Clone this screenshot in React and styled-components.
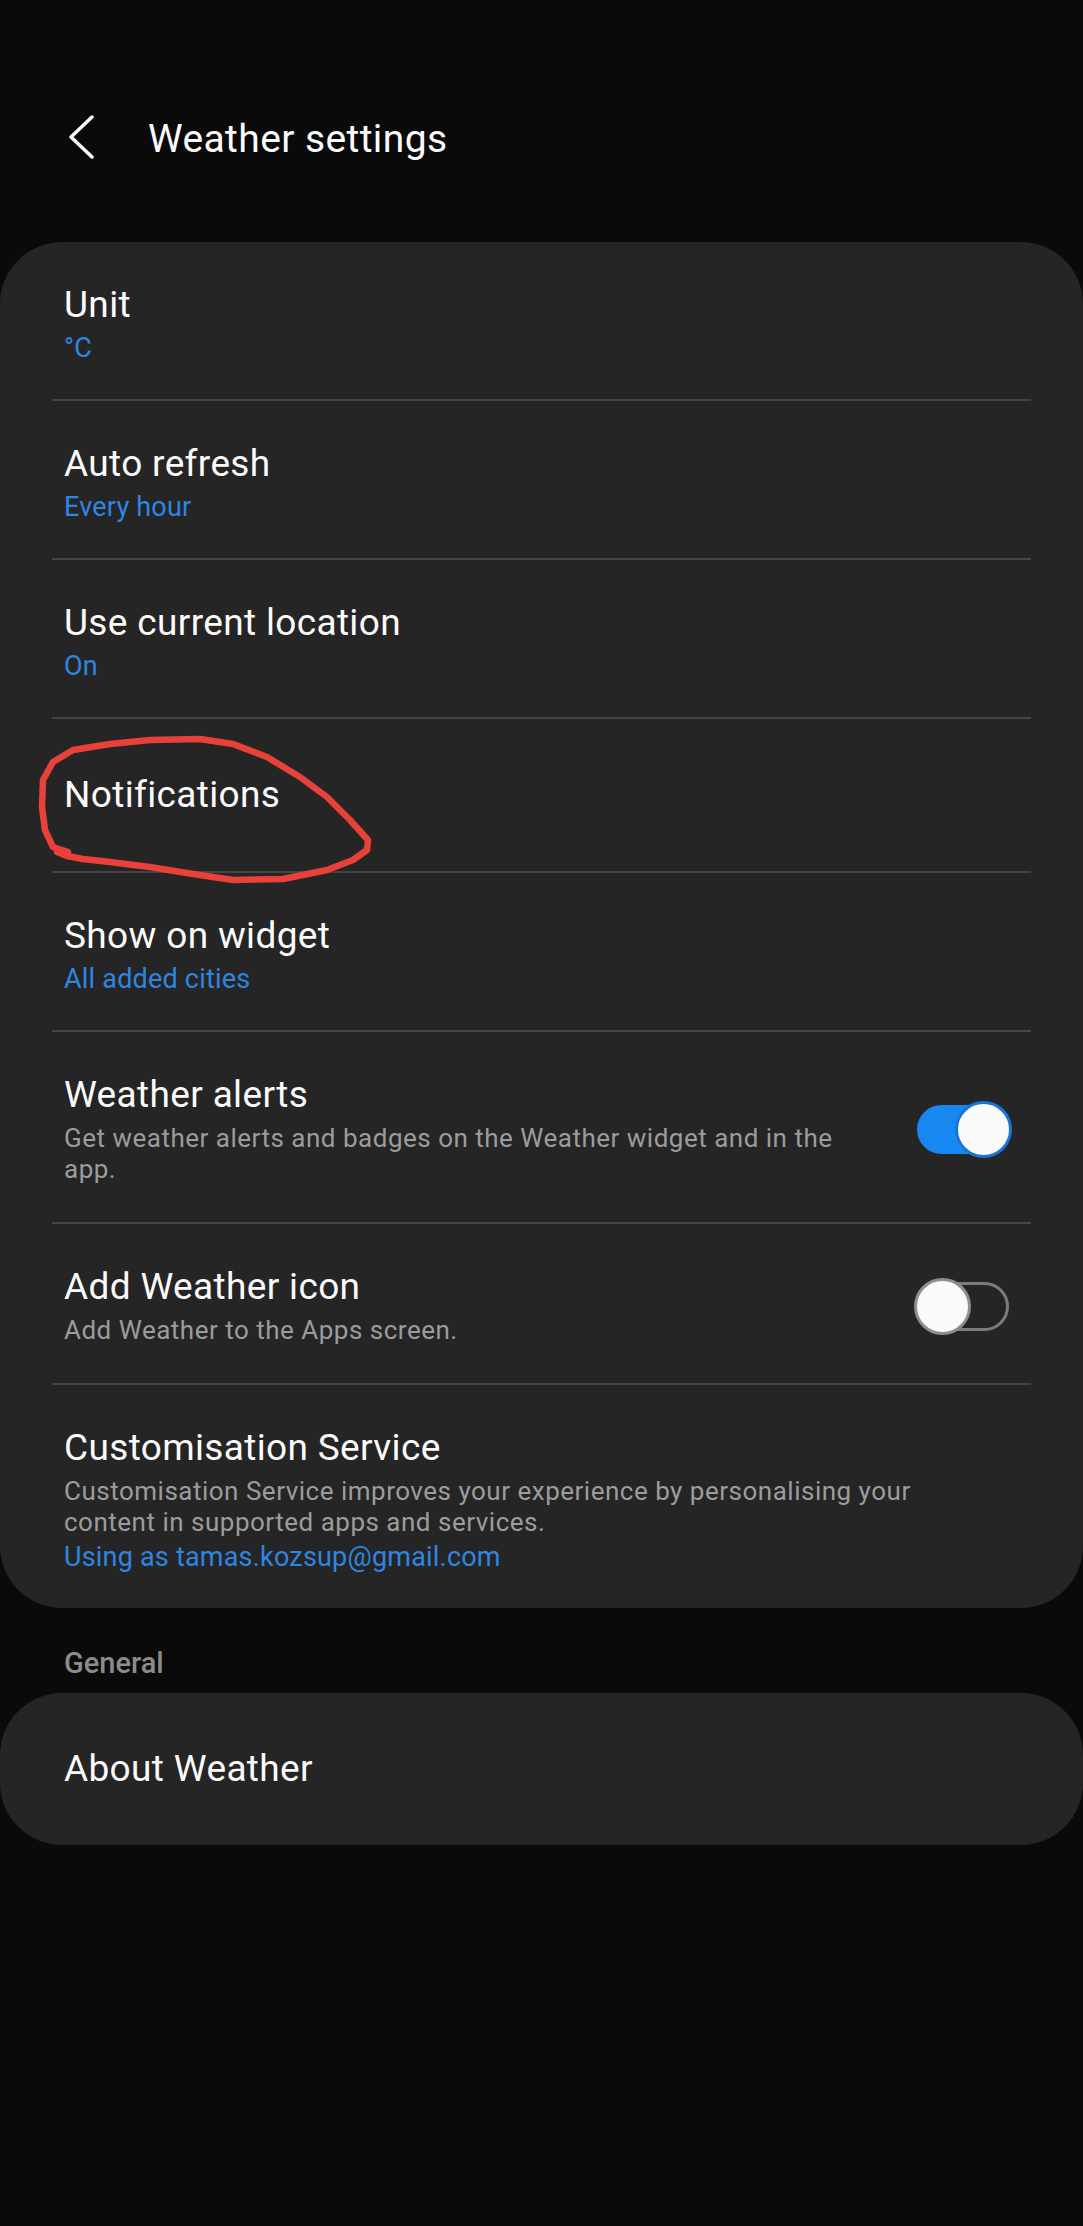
import styled, { createGlobalStyle } from "styled-components";

const GlobalStyle = createGlobalStyle`
    body {
        margin: 0;
        background: #0a0a0a;
        font-family: Roboto, "Noto Sans", "Liberation Sans", sans-serif;
        -webkit-font-smoothing: antialiased;
    }
`;

const Page = styled.div`
    min-height: 2226px;
    background: #0a0a0a;
`;

const Header = styled.header`
    display: flex;
    align-items: center;
    height: 56px;
    padding: 111px 0 0 68px;
`;

const BackButton = styled.button`
    display: flex;
    padding: 0;
    margin: -4px 54px 0 0;
    border: none;
    background: none;
    cursor: pointer;
`;

const HeaderTitle = styled.h1`
    margin: 0;
    font-size: 39px;
    font-weight: 400;
    line-height: 48px;
    letter-spacing: 0.4px;
    color: #fafafa;
`;

const Card = styled.section`
    margin-top: ${(p) => p.$top}px;
    padding: 0 52px;
    background: #252525;
    border-radius: 62px;
`;

const Row = styled.div`
    position: relative;
    display: flex;
    align-items: center;
    gap: 28px;
    padding: ${(p) => (p.$single ? "52px 19px 52px 12px" : "39px 19px 34px 12px")};
    border-bottom: ${(p) => (p.$last ? "none" : "2px solid #454545")};
`;

const TextBlock = styled.div`
    flex: 1;
    min-width: 0;
    padding-right: 28px;
`;

const Title = styled.div`
    font-size: 37px;
    line-height: 48px;
    letter-spacing: 0.35px;
    color: #fafafa;
`;

const Value = styled.div`
    margin-top: ${(p) => (p.$afterDesc ? 0 : 3)}px;
    font-size: 27px;
    line-height: 33px;
    letter-spacing: 0.2px;
    color: #2f86e0;
`;

const Desc = styled.div`
    margin: 4px 0 3px;
    font-size: 26px;
    line-height: 31px;
    letter-spacing: 0.5px;
    color: #9c9c9c;
`;

const SwitchBox = styled.div`
    position: relative;
    flex: none;
    width: 96px;
    height: 57px;
`;

const Track = styled.div`
    position: absolute;
    top: 4px;
    bottom: 4px;
    left: 1px;
    right: 3px;
    box-sizing: border-box;
    border-radius: 25px;
    background: ${(p) => (p.$on ? "#1787f2" : "transparent")};
    border: 3px solid ${(p) => (p.$on ? "#1787f2" : "#7c7c7c")};
`;

const Thumb = styled.div`
    position: absolute;
    top: 0;
    ${(p) => (p.$on ? "right: 0;" : "left: -2px;")}
    width: 57px;
    height: 57px;
    box-sizing: border-box;
    border-radius: 50%;
    background: #fafafa;
    border: 3px solid ${(p) => (p.$on ? "#1a74d6" : "#8e8e8e")};
`;

const SectionLabel = styled.div`
    margin: 37px 0 0 64px;
    font-size: 29px;
    font-weight: 500;
    line-height: 36px;
    color: #8c8c8c;
`;

const Scribble = styled.svg`
    position: absolute;
    left: -52px;
    top: 0;
    pointer-events: none;
    z-index: 2;
`;

function Switch({ on }) {
    return (
        <SwitchBox>
            <Track $on={on} />
            <Thumb $on={on} />
        </SwitchBox>
    );
}

// hand-drawn red loop around "Notifications", in page coordinates
const scribble =
    "68,855 53,850 45,833 42,810 43,783 53,765 73,753 110,747 150,743 200,742 233,747 267,760 300,780 327,800 350,823 368,843 367,853 353,863 327,873 283,882 233,883 193,877 150,870 110,865 83,862 67,859 57,855";

const settings = [
    { title: "Unit", value: "°C" },
    { title: "Auto refresh", value: "Every hour" },
    { title: "Use current location", value: "On" },
    { title: "Notifications", marked: true },
    { title: "Show on widget", value: "All added cities" },
    {
        title: "Weather alerts",
        desc: "Get weather alerts and badges on the Weather widget and in the app.",
        toggle: true,
    },
    { title: "Add Weather icon", desc: "Add Weather to the Apps screen.", toggle: false },
    {
        title: "Customisation Service",
        desc: "Customisation Service improves your experience by personalising your content in supported apps and services.",
        value: "Using as tamas.kozsup@gmail.com",
    },
];

export default function App() {
    return (
        <Page>
            <GlobalStyle />
            <Header>
                <BackButton aria-label="Back">
                    <svg width="26" height="44" viewBox="0 0 26 44">
                        <polyline
                            points="24,2 3,22 24,42"
                            fill="none"
                            stroke="#fafafa"
                            strokeWidth="3.5"
                            strokeLinecap="round"
                            strokeLinejoin="round"
                        />
                    </svg>
                </BackButton>
                <HeaderTitle>Weather settings</HeaderTitle>
            </Header>

            <Card $top={75}>
                {settings.map((s, i) => (
                    <Row
                        key={s.title}
                        $single={!s.value && !s.desc}
                        $last={i === settings.length - 1}
                    >
                        <TextBlock>
                            <Title>{s.title}</Title>
                            {s.desc && <Desc>{s.desc}</Desc>}
                            {s.value && <Value $afterDesc={!!s.desc}>{s.value}</Value>}
                        </TextBlock>
                        {s.toggle !== undefined && <Switch on={s.toggle} />}
                        {s.marked && (
                            <Scribble width="400" height="170" viewBox="0 722 400 170">
                                <polyline
                                    points={scribble}
                                    fill="none"
                                    stroke="#e8413a"
                                    strokeWidth="6.5"
                                    strokeLinecap="round"
                                    strokeLinejoin="round"
                                />
                            </Scribble>
                        )}
                    </Row>
                ))}
            </Card>

            <SectionLabel>General</SectionLabel>
            <Card $top={12}>
                <Row $single $last>
                    <TextBlock>
                        <Title>About Weather</Title>
                    </TextBlock>
                </Row>
            </Card>
        </Page>
    );
}
